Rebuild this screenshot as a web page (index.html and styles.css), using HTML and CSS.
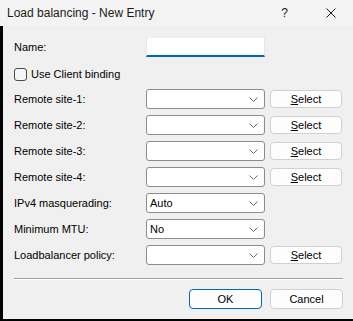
FILE: index.html
```html
<!DOCTYPE html>
<html lang="en">
<head>
  <meta charset="UTF-8" />
  <title>Load balancing - New Entry</title>
  <link rel="stylesheet" href="styles.css">
</head>
<body>

<div class="dialog">
  <!-- title bar -->
  <div class="titlebar">
    <span class="title">Load balancing - New Entry</span>
    <span class="help">?</span>
    <svg class="close" width="10" height="10" viewBox="0 0 10 10">
      <path d="M0.5 0.5 L9.5 9.5 M9.5 0.5 L0.5 9.5" stroke="#1a1a1a" stroke-width="1" fill="none"/>
    </svg>
  </div>

  <div class="content">
    <div class="row name-row">
      <label class="lbl">Name:</label>
      <div class="textbox"></div>
    </div>

    <div class="row check-row">
      <span class="checkbox"></span>
      <span class="check-text">Use Client binding</span>
    </div>

    <div class="rows">
      <div class="row">
        <label class="lbl">Remote site-1:</label>
        <div class="combo"><span></span><svg class="chev" width="9" height="5" viewBox="0 0 9 5"><path d="M0.5 0.5 L4.5 4.5 L8.5 0.5" stroke="#6b6b6b" fill="none"/></svg></div>
        <button class="btn"><u>S</u>elect</button>
      </div>
      <div class="row">
        <label class="lbl">Remote site-2:</label>
        <div class="combo"><span></span><svg class="chev" width="9" height="5" viewBox="0 0 9 5"><path d="M0.5 0.5 L4.5 4.5 L8.5 0.5" stroke="#6b6b6b" fill="none"/></svg></div>
        <button class="btn"><u>S</u>elect</button>
      </div>
      <div class="row">
        <label class="lbl">Remote site-3:</label>
        <div class="combo"><span></span><svg class="chev" width="9" height="5" viewBox="0 0 9 5"><path d="M0.5 0.5 L4.5 4.5 L8.5 0.5" stroke="#6b6b6b" fill="none"/></svg></div>
        <button class="btn"><u>S</u>elect</button>
      </div>
      <div class="row">
        <label class="lbl">Remote site-4:</label>
        <div class="combo"><span></span><svg class="chev" width="9" height="5" viewBox="0 0 9 5"><path d="M0.5 0.5 L4.5 4.5 L8.5 0.5" stroke="#6b6b6b" fill="none"/></svg></div>
        <button class="btn"><u>S</u>elect</button>
      </div>
      <div class="row">
        <label class="lbl">IPv4 masquerading:</label>
        <div class="combo"><span>Auto</span><svg class="chev" width="9" height="5" viewBox="0 0 9 5"><path d="M0.5 0.5 L4.5 4.5 L8.5 0.5" stroke="#6b6b6b" fill="none"/></svg></div>
      </div>
      <div class="row">
        <label class="lbl">Minimum MTU:</label>
        <div class="combo"><span>No</span><svg class="chev" width="9" height="5" viewBox="0 0 9 5"><path d="M0.5 0.5 L4.5 4.5 L8.5 0.5" stroke="#6b6b6b" fill="none"/></svg></div>
      </div>
      <div class="row">
        <label class="lbl">Loadbalancer policy:</label>
        <div class="combo"><span></span><svg class="chev" width="9" height="5" viewBox="0 0 9 5"><path d="M0.5 0.5 L4.5 4.5 L8.5 0.5" stroke="#6b6b6b" fill="none"/></svg></div>
        <button class="btn"><u>S</u>elect</button>
      </div>
    </div>

    <div class="separator"></div>

    <div class="footer">
      <button class="btn btn-default">OK</button>
      <button class="btn">Cancel</button>
    </div>
  </div>
</div>

</body>
</html>
```

FILE: styles.css
```css
body {
  margin: 0;
  font-family: 'Liberation Sans', Arial, sans-serif;
  font-size: 11px;
  color: #000;
  background: #f0f0f0;
}

.dialog {
  width: 353px;
  height: 321px;
  display: flex;
  flex-direction: column;
}

.titlebar {
  height: 26px;
  background: #f3f3f3;
  display: flex;
  align-items: center;
  padding-left: 7px;
  box-sizing: border-box;
}

.title {
  font-size: 12px;
  color: #1a1a1a;
  flex: 1;
}

.help {
  font-size: 12px;
  margin-right: 38px;
  color: #1a1a1a;
}

.close {
  margin-right: 17px;
}

.content {
  flex: 1;
  background: #f0f0f0;
  border-left: 3px solid #000;
  border-bottom: 2px solid #000;
  padding: 11px 10px 10px 11px;
  display: flex;
  flex-direction: column;
}

.row {
  display: flex;
  align-items: center;
  height: 20px;
}

.lbl {
  width: 132px;
  flex-shrink: 0;
}

.textbox {
  width: 119px;
  height: 20px;
  box-sizing: border-box;
  background: #fff;
  border: 1px solid #e6e6e6;
  border-top-color: #f0f0f0;
  border-bottom: 2px solid #0067c0;
}

.check-row {
  margin-top: 7px;
}

.checkbox {
  width: 13px;
  height: 13px;
  box-sizing: border-box;
  border: 1px solid #4a4a4a;
  border-radius: 3px;
  background: #f6f6f6;
  margin-right: 4px;
}

.rows {
  margin-top: 5px;
  display: flex;
  flex-direction: column;
  gap: 6px;
}

.combo {
  width: 119px;
  height: 20px;
  box-sizing: border-box;
  background: #fff;
  border: 1px solid #8c8c8c;
  border-radius: 3px;
  display: flex;
  align-items: center;
  padding: 0 6px 0 3px;
  margin-right: 5px;
}

.combo span {
  flex: 1;
}

.btn {
  width: 72px;
  height: 18px;
  box-sizing: border-box;
  background: #fdfdfd;
  border: 1px solid #d0d0d0;
  border-radius: 4px;
  font-family: inherit;
  font-size: 11px;
  color: #000;
  padding: 0;
}

.separator {
  margin-top: 13px;
  border-top: 1px solid #a0a0a0;
  border-bottom: 1px solid #fff;
}

.footer {
  margin-top: 9px;
  display: flex;
  justify-content: flex-end;
  gap: 8px;
}

.footer .btn {
  width: 73px;
  height: 20px;
}

.btn-default {
  border-color: #0067c0;
}
```
